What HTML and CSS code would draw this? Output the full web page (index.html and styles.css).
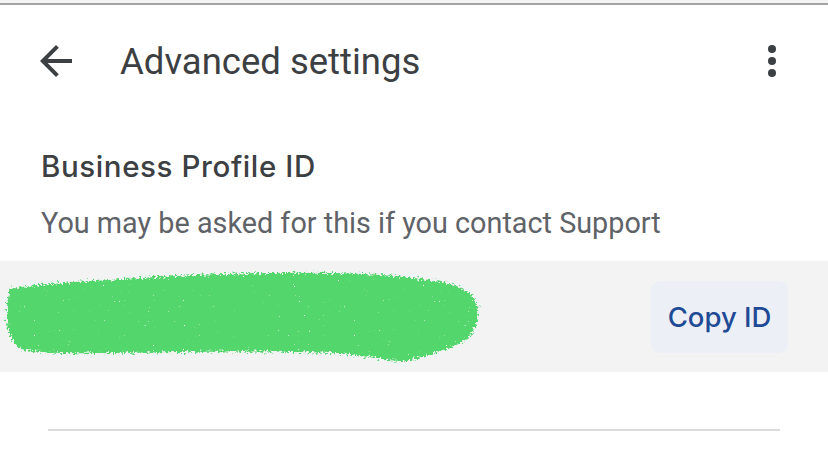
FILE: index.html
```html
<!DOCTYPE html>
<html lang="en">
<head>
<meta charset="utf-8">
<title>Advanced settings</title>
<link rel="stylesheet" href="styles.css">
</head>
<body>
<div class="statusbar"></div>
<header class="appbar">
  <button class="icon-btn" aria-label="Back">
    <svg width="48" height="48" viewBox="0 0 24 24"><path d="M20 11H7.83l5.59-5.59L12 4l-8 8 8 8 1.41-1.41L7.83 13H20v-2z" fill="#3c4043"/></svg>
  </button>
  <h1 class="title">Advanced settings</h1>
  <button class="icon-btn more" aria-label="More options">
    <svg width="48" height="48" viewBox="0 0 24 24"><circle cx="12" cy="6" r="2" fill="#3c4043"/><circle cx="12" cy="12" r="2" fill="#3c4043"/><circle cx="12" cy="18" r="2" fill="#3c4043"/></svg>
  </button>
</header>
<section class="section">
  <h2 class="heading">Business Profile ID</h2>
  <p class="sub">You may be asked for this if you contact Support</p>
</section>
<div class="id-row">
  <svg class="scribble" width="480" height="96" viewBox="0 0 480 96">
    <defs>
      <filter id="rough" x="-5%" y="-20%" width="110%" height="140%">
        <feTurbulence type="fractalNoise" baseFrequency="0.45" numOctaves="2" seed="4" result="n"/>
        <feDisplacementMap in="SourceGraphic" in2="n" scale="9" xChannelSelector="R" yChannelSelector="G" result="d"/>
        <feTurbulence type="fractalNoise" baseFrequency="0.8" numOctaves="1" seed="9" result="n2"/>
        <feColorMatrix in="n2" type="matrix" values="0 0 0 0 0  0 0 0 0 0  0 0 0 0 0  14 0 0 0 -10.2" result="holes"/>
        <feComposite in="d" in2="holes" operator="out"/>
      </filter>
    </defs>
    <path filter="url(#rough)" fill="#52d66c" d="M8 20 C40 14 90 12 140 9 C200 5 270 3 330 4 C380 5 420 9 445 14 C465 19 474 28 476 40 C477 52 472 64 462 72 C445 80 420 90 400 92 C385 92 370 87 330 84 C260 81 180 83 110 84 C70 85 35 84 18 80 C8 72 4 58 5 44 C5 34 6 26 8 20 Z"/>
  </svg>
  <button class="copy-btn">Copy ID</button>
</div>
<div class="divider"></div>
</body>
</html>
```
FILE: styles.css
```css
html, body {
  margin: 0;
  padding: 0;
  background: #ffffff;
  font-family: Roboto, "Liberation Sans", sans-serif;
  color: #3c4043;
}

.statusbar {
  height: 3px;
  background: #f4f4f4;
  border-bottom: 2px solid #a3a3a3;
}

.appbar {
  display: flex;
  align-items: center;
  height: 112px;
  padding: 0 32px;
}

.icon-btn {
  border: 0;
  background: none;
  padding: 0;
  width: 48px;
  height: 48px;
  display: block;
}

.icon-btn svg {
  display: block;
}

.title {
  flex: 1;
  margin: 0 0 0 40px;
  font-size: 36.5px;
  font-weight: 400;
  color: #3c4043;
}

.section {
  padding: 0 41px;
  margin-top: 31px;
}

.heading {
  margin: 0;
  font-family: Inter, Roboto, sans-serif;
  font-size: 29.5px;
  font-weight: 500;
  letter-spacing: 0.6px;
  line-height: 36px;
  color: #3c4043;
}

.sub {
  margin: 22px 0 0;
  font-size: 28.8px;
  line-height: 34px;
  color: #5f6368;
}

.id-row {
  margin-top: 21px;
  height: 111px;
  background: #f3f3f3;
  display: flex;
  align-items: center;
  justify-content: space-between;
  padding: 0 40px 0 2px;
}

.scribble {
  display: block;
}

.copy-btn {
  border: 0;
  background: #eceff5;
  border-radius: 9px;
  width: 137px;
  height: 72px;
  font-family: Inter, Roboto, sans-serif;
  font-size: 27.5px;
  font-weight: 500;
  color: #1f4a96;
  padding: 0;
}

.divider {
  margin: 57px 48px 0 48px;
  height: 2px;
  background: #dadada;
}
```
